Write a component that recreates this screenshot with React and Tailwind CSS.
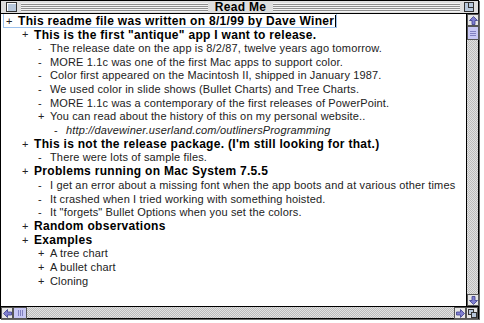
import React from 'react';

const LINES = [
  { level: 0, mark: '+', bold: true, text: 'This readme file was written on 8/1/99 by Dave Winer', selected: true },
  { level: 1, mark: '+', bold: true, text: 'This is the first "antique" app I want to release.' },
  { level: 2, mark: '-', text: 'The release date on the app is 8/2/87, twelve years ago tomorrow.' },
  { level: 2, mark: '-', text: 'MORE 1.1c was one of the first Mac apps to support color.' },
  { level: 2, mark: '-', text: 'Color first appeared on the Macintosh II, shipped in January 1987.' },
  { level: 2, mark: '-', text: 'We used color in slide shows (Bullet Charts) and Tree Charts.' },
  { level: 2, mark: '-', text: 'MORE 1.1c was a contemporary of the first releases of PowerPoint.' },
  { level: 2, mark: '+', text: 'You can read about the history of this on my personal website..' },
  { level: 3, mark: '-', italic: true, text: 'http://davewiner.userland.com/outlinersProgramming' },
  { level: 1, mark: '+', bold: true, text: "This is not the release package. (I'm still looking for that.)" },
  { level: 2, mark: '-', text: 'There were lots of sample files.' },
  { level: 1, mark: '+', bold: true, text: 'Problems running on Mac System 7.5.5' },
  { level: 2, mark: '-', text: 'I get an error about a missing font when the app boots and at various other times' },
  { level: 2, mark: '-', text: 'It crashed when I tried working with something hoisted.' },
  { level: 2, mark: '-', text: 'It "forgets" Bullet Options when you set the colors.' },
  { level: 1, mark: '+', bold: true, text: 'Random observations' },
  { level: 1, mark: '+', bold: true, text: 'Examples' },
  { level: 2, mark: '+', text: 'A tree chart' },
  { level: 2, mark: '+', text: 'A bullet chart' },
  { level: 2, mark: '+', text: 'Cloning' },
];

const INDENT = ['pl-[5px]', 'pl-[21px]', 'pl-[37px]', 'pl-[53px]'];

const STRIPES =
  'bg-[repeating-linear-gradient(to_bottom,#f4f4f4_0px,#f4f4f4_1px,#8e8e8e_1px,#8e8e8e_2px)]';
const TRACK =
  'bg-[repeating-conic-gradient(#bcbcbc_0%_25%,#e2e2e2_0%_50%)] bg-[length:2px_2px]';

function Arrow({ dir }) {
  const rot = { up: 0, right: 90, down: 180, left: 270 }[dir];
  return (
    <div className="w-[12px] h-[12px] bg-[#e6e6e6] border border-[#555] flex items-center justify-center shrink-0">
      <svg width="9" height="9" viewBox="0 0 9 9" style={{ transform: `rotate(${rot}deg)` }}>
        <path d="M4.5 0.5 L8.5 4.5 L6 4.5 L6 8.5 L3 8.5 L3 4.5 L0.5 4.5 Z" fill="#7f7fd0" stroke="#3c3c8c" strokeWidth="0.8" />
      </svg>
    </div>
  );
}

function Thumb({ vertical }) {
  return (
    <div
      className={`bg-[#c8c8f4] border border-[#555] flex items-center justify-center shrink-0 ${
        vertical ? 'w-[12px] h-[14px] flex-col gap-[1px]' : 'w-[14px] h-[12px] flex-row gap-[1px]'
      }`}
    >
      {[0, 1, 2].map((i) => (
        <div key={i} className={vertical ? 'w-[6px] h-px bg-[#8080c0]' : 'h-[6px] w-px bg-[#8080c0]'} />
      ))}
    </div>
  );
}

function Row({ line }) {
  const font = line.bold
    ? 'font-bold text-[12px] tracking-[0.3px] text-black'
    : line.italic
    ? 'italic text-[11px] tracking-[0.15px] text-[#222]'
    : 'text-[11px] tracking-[0.15px] text-[#222]';
  const content = (
    <>
      <span className="w-[12px] shrink-0 text-[11px] font-normal text-[#222]">{line.mark}</span>
      <span className={`whitespace-nowrap ${font}`}>{line.text}</span>
    </>
  );
  if (line.selected) {
    return (
      <div className="h-[13.7px] flex items-center pl-[3px]">
        <div className="flex items-center h-[13px] pl-[2px] outline outline-1 outline-[#9cc2ee]">
          {content}
          <span className="w-px h-[12px] bg-black ml-[1px]" />
        </div>
      </div>
    );
  }
  return <div className={`h-[13.7px] flex items-center ${INDENT[line.level]}`}>{content}</div>;
}

export default function App() {
  return (
    <div
      className="w-[484px] h-[323px] bg-white overflow-hidden"
      style={{ fontFamily: '"Liberation Sans", Arial, sans-serif' }}
    >
      <div className="w-[479px] h-[319px] flex flex-col border border-black shadow-[1px_1px_0_#666] bg-white">
        {/* Title bar */}
        <div className="h-[13px] shrink-0 flex items-center bg-[#dedede] border-b border-black px-[2px] gap-[2px]">
          <div className="w-[11px] h-[10px] border border-[#333] bg-[#b8c8dc] shadow-[inset_1px_1px_0_#fff] ml-[3px] mr-[2px]" />
          <div className={`flex-1 h-[9px] ${STRIPES}`} />
          <div className="px-[5px] text-[12px] font-bold tracking-[0.3px] text-black leading-none">Read Me</div>
          <div className={`flex-1 h-[9px] ${STRIPES}`} />
          <div className="w-[10px] h-[10px] border border-[#333] bg-[#b8c8dc] flex items-start justify-end mx-[2px]">
            <div className="w-[5px] h-[5px] border-l border-b border-[#333]" />
          </div>
        </div>

        {/* Body */}
        <div className="flex-1 flex min-h-0">
          <div className="flex-1 overflow-hidden">
            {LINES.map((line, i) => (
              <Row key={i} line={line} />
            ))}
          </div>
          <div className="w-[12px] flex flex-col border-l border-black">
            <Arrow dir="up" />
            <Thumb vertical />
            <div className={`flex-1 ${TRACK}`} />
            <Arrow dir="down" />
          </div>
        </div>

        {/* Bottom scrollbar */}
        <div className="h-[12px] shrink-0 flex border-t border-black">
          <Arrow dir="left" />
          <Thumb />
          <div className={`flex-1 ${TRACK}`} />
          <Arrow dir="right" />
          <div className="w-[12px] h-[12px] bg-[#e6e6e6] border border-[#555] flex items-center justify-center">
            <div className="w-[9px] h-[9px] relative">
              <div className="absolute left-0 top-0 w-[6px] h-[6px] border border-[#333] bg-[#b8c8dc]" />
              <div className="absolute right-0 bottom-0 w-[6px] h-[6px] border border-[#333] bg-[#b8c8dc]" />
            </div>
          </div>
        </div>
      </div>
    </div>
  );
}
